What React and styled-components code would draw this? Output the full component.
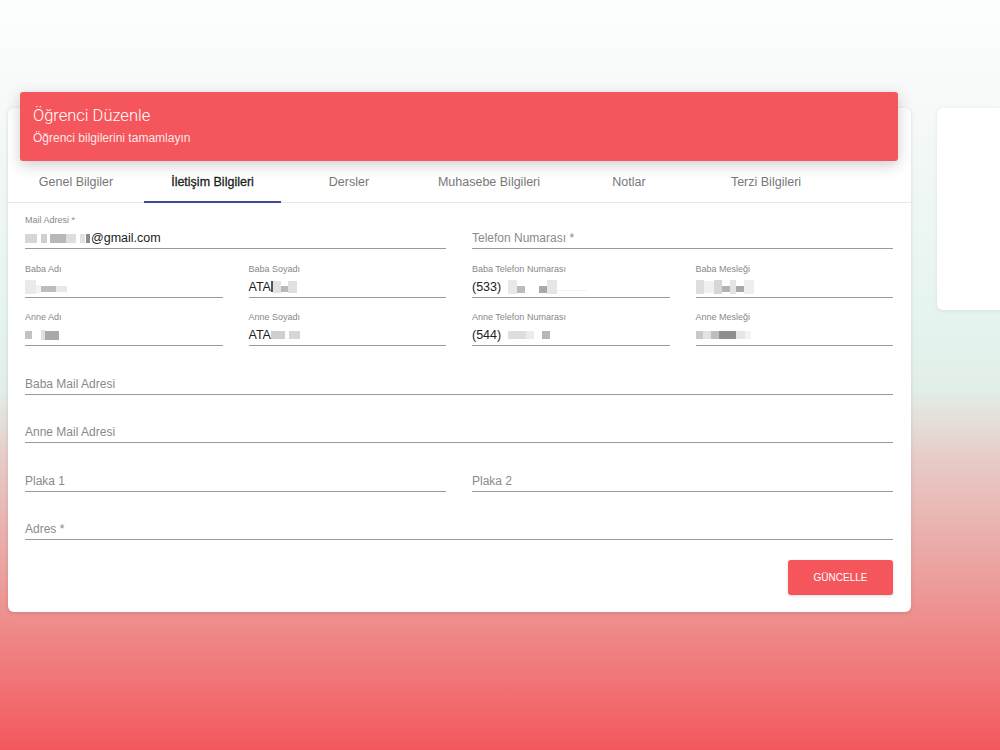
import React from 'react'
import styled, { createGlobalStyle } from 'styled-components'

const GlobalStyle = createGlobalStyle`
  * { box-sizing: border-box; }
  html, body { margin: 0; padding: 0; }
  body {
    font-family: "Liberation Sans", Arial, sans-serif;
    background: #fff;
  }
`

const Page = styled.div`
  width: 1000px;
  height: 750px;
  overflow: hidden;
  display: flex;
  align-items: flex-start;
  padding: 108px 0 0 8px;
  gap: 26px;
  background: linear-gradient(
    to bottom,
    #fdfefe 0px,
    #f6f9f8 110px,
    #e5f4ef 320px,
    #e2eee8 390px,
    #e7cbc7 460px,
    #ec9e9c 580px,
    #ef8585 640px,
    #f26468 720px,
    #f2575d 750px
  );
`

const Card = styled.div`
  width: 903px;
  background: #fff;
  border-radius: 6px;
  box-shadow: 0 1px 4px rgba(0, 0, 0, 0.12);
  display: flex;
  flex-direction: column;
`

const SideCard = styled.div`
  flex: 1;
  height: 202px;
  background: #fff;
  border-radius: 6px 0 0 6px;
  box-shadow: 0 1px 4px rgba(0, 0, 0, 0.08);
`

const Header = styled.div`
  margin: -16px 13px 0 12px;
  height: 69px;
  background: #f5565c;
  border-radius: 3px;
  box-shadow: 0 4px 14px rgba(60, 60, 60, 0.25);
  padding: 14px 13px;
  color: #fff;
`

const Title = styled.div`
  font-family: Roboto, "Liberation Sans", sans-serif;
  font-weight: 300;
  font-size: 16.5px;
  line-height: 19px;
`

const Subtitle = styled.div`
  font-family: "Liberation Sans", Arial, sans-serif;
  font-size: 12px;
  line-height: 14px;
  margin-top: 6px;
  color: rgba(255, 255, 255, 0.88);
`

const TabBar = styled.div`
  display: flex;
  height: 42px;
  border-bottom: 1px solid #e8e8e8;
`

const Tab = styled.div`
  width: ${p => p.$w}px;
  display: flex;
  align-items: center;
  justify-content: center;
  font-size: 12.5px;
  color: ${p => (p.$active ? '#1d1d1d' : '#777')};
  -webkit-text-stroke: ${p => (p.$active ? '0.3px #1d1d1d' : '0')};
  border-bottom: 2px solid ${p => (p.$active ? '#3d4a9c' : 'transparent')};
  margin-bottom: -1px;
  padding-top: 2px;
`

const Form = styled.div`
  padding: 0 18px 17px 17px;
  display: grid;
  grid-template-columns: repeat(4, 1fr);
  grid-template-rows: 46px repeat(6, 48.5px);
  column-gap: 26px;
`

const Field = styled.div`
  grid-column: span ${p => p.$span || 1};
  display: flex;
  flex-direction: column;
  justify-content: flex-end;
  border-bottom: 1px solid #9a9a9a;
  padding-bottom: 1px;
`

const Label = styled.div`
  font-size: 9px;
  line-height: 12px;
  color: #888;
  margin-bottom: 3px;
`

const Value = styled.div`
  font-size: ${p => (p.$placeholder ? 12 : 12.5)}px;
  line-height: 18px;
  color: ${p => (p.$placeholder ? '#8a8a8a' : '#222')};
  display: flex;
  align-items: center;
  white-space: nowrap;
`

const Blocks = styled.span`
  display: inline-flex;
  align-items: center;
  height: 18px;
  filter: blur(0.6px);
`

const Block = styled.span`
  display: inline-block;
  width: ${p => p.$w}px;
  height: ${p => p.$h || 9}px;
  background: ${p => p.$c};
  margin-top: ${p => p.$dy || 0}px;
`

const Actions = styled.div`
  grid-column: 1 / -1;
  display: flex;
  justify-content: flex-end;
  padding-top: 20px;
`

const Button = styled.button`
  width: 105px;
  height: 35px;
  border: none;
  border-radius: 3px;
  background: #f5565c;
  color: #fff;
  font-family: "Liberation Sans", Arial, sans-serif;
  font-size: 10px;
  box-shadow: 0 1px 3px rgba(0, 0, 0, 0.15);
`

const Redacted = ({ parts }) => (
  <Blocks>
    {parts.map((b, i) => (
      <Block key={i} $w={b[0]} $c={b[1]} $h={b[2]} $dy={b[3]} />
    ))}
  </Blocks>
)

const tabs = [
  { label: 'Genel Bilgiler', w: 136 },
  { label: 'İletişim Bilgileri', w: 137 },
  { label: 'Dersler', w: 136 },
  { label: 'Muhasebe Bilgileri', w: 144 },
  { label: 'Notlar', w: 136 },
  { label: 'Terzi Bilgileri', w: 138 },
]

const mailBlocks = [[12, '#d6d6d6'], [4, 'transparent'], [6, '#cfcfcf'], [3, 'transparent'], [16, '#b8b8b8'], [10, '#dedede'], [4, 'transparent'], [5, '#e2e2e2'], [1, 'transparent'], [4, '#8c8c8c'], [1, 'transparent']]

export default function App() {
  return (
    <>
      <GlobalStyle />
      <Page>
        <Card>
          <Header>
            <Title>Öğrenci Düzenle</Title>
            <Subtitle>Öğrenci bilgilerini tamamlayın</Subtitle>
          </Header>
          <TabBar>
            {tabs.map((t, i) => (
              <Tab key={t.label} $w={t.w} $active={i === 1}>{t.label}</Tab>
            ))}
          </TabBar>
          <Form>
            <Field $span={2}>
              <Label>Mail Adresi *</Label>
              <Value>
                <Redacted parts={mailBlocks} />
                @gmail.com
              </Value>
            </Field>
            <Field $span={2}>
              <Value $placeholder>Telefon Numarası *</Value>
            </Field>

            <Field>
              <Label>Baba Adı</Label>
              <Value>
                <Redacted parts={[[11, '#eaeaea', 14], [5, '#f2f2f2', 8, 4], [15, '#bdbdbd', 6, 5], [11, '#e8e8e8', 6, 5]]} />
              </Value>
            </Field>
            <Field>
              <Label>Baba Soyadı</Label>
              <Value>
                ATA
                <Redacted parts={[[2, '#555', 11], [8, '#e3e3e3', 12], [7, '#b9b9b9', 6, 5], [9, '#e0e0e0', 12]]} />
              </Value>
            </Field>
            <Field>
              <Label>Baba Telefon Numarası</Label>
              <Value>
                (533)
                <Redacted parts={[[7, 'transparent'], [9, '#e8e8e8', 14], [8, '#bcbcbc', 7, 5], [14, 'transparent'], [8, '#a9a9a9', 7, 5], [10, '#e6e6e6', 14], [30, '#f2f2f2', 1, 8]]} />
              </Value>
            </Field>
            <Field>
              <Label>Baba Mesleği</Label>
              <Value>
                <Redacted parts={[[8, '#dedede', 14], [10, '#f0f0f0', 12], [8, '#d6d6d6', 14], [8, '#b3b3b3', 6, 5], [6, '#e3e3e3', 14], [8, '#a8a8a8', 6, 5], [10, '#eeeeee', 14]]} />
              </Value>
            </Field>

            <Field>
              <Label>Anne Adı</Label>
              <Value>
                <Redacted parts={[[7, '#c2c2c2', 8], [9, 'transparent'], [4, '#e0e0e0', 10], [14, '#a9a9a9', 9]]} />
              </Value>
            </Field>
            <Field>
              <Label>Anne Soyadı</Label>
              <Value>
                ATA
                <Redacted parts={[[14, '#cfcfcf', 8], [4, 'transparent'], [11, '#d6d6d6', 8]]} />
              </Value>
            </Field>
            <Field>
              <Label>Anne Telefon Numarası</Label>
              <Value>
                (544)
                <Redacted parts={[[7, 'transparent'], [18, '#dddddd', 8], [8, '#ececec', 8], [8, 'transparent'], [8, '#b7b7b7', 8]]} />
              </Value>
            </Field>
            <Field>
              <Label>Anne Mesleği</Label>
              <Value>
                <Redacted parts={[[7, '#c9c9c9', 8], [8, '#e2e2e2', 8], [8, '#bdbdbd', 8], [17, '#8f8f8f', 8], [9, '#e6e6e6', 8], [6, '#f3f3f3', 8]]} />
              </Value>
            </Field>

            <Field $span={4}>
              <Value $placeholder>Baba Mail Adresi</Value>
            </Field>
            <Field $span={4}>
              <Value $placeholder>Anne Mail Adresi</Value>
            </Field>
            <Field $span={2}>
              <Value $placeholder>Plaka 1</Value>
            </Field>
            <Field $span={2}>
              <Value $placeholder>Plaka 2</Value>
            </Field>
            <Field $span={4}>
              <Value $placeholder>Adres *</Value>
            </Field>

            <Actions>
              <Button>GÜNCELLE</Button>
            </Actions>
          </Form>
        </Card>
        <SideCard />
      </Page>
    </>
  )
}
